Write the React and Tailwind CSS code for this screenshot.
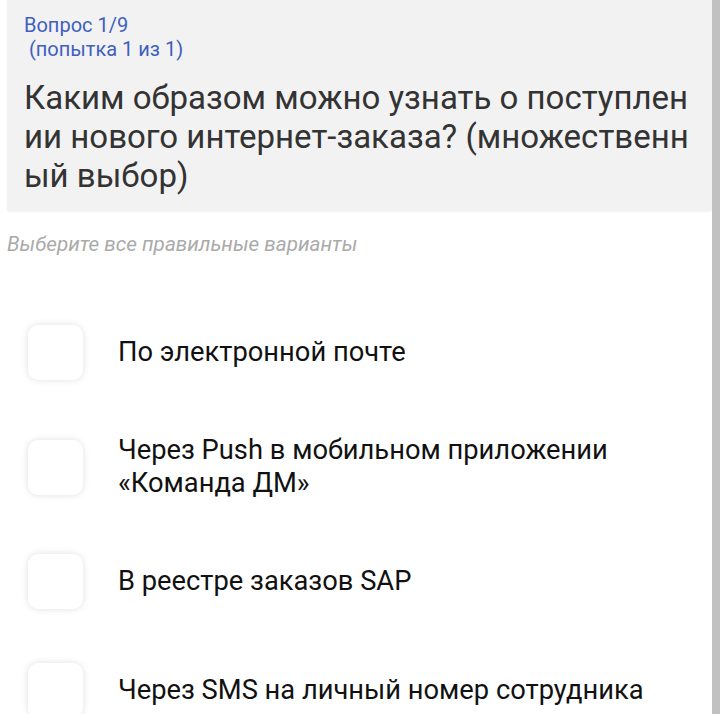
const options = [
  "По электронной почте",
  "Через Push в мобильном приложении «Команда ДМ»",
  "В реестре заказов SAP",
  "Через SMS на личный номер сотрудника",
];

export default function App() {
  return (
    <div className="flex h-[714px] w-[720px] overflow-hidden bg-white font-['Roboto',sans-serif]">
      <div className="flex-1 pl-[7px]">
        {/* question header */}
        <div className="h-[211px] rounded-b-[3px] bg-[#f2f2f2] pl-[17px] pr-[18px] pt-[13px] shadow-[0_1px_2px_rgba(0,0,0,0.05)]">
          <div className="text-[20px] leading-[24px] text-[#3f5fbf]">
            Вопрос 1/9
            <br />
            &nbsp;(попытка 1 из 1)
          </div>
          <div className="mt-[17px] break-all text-[33px] leading-[39px] text-[#333]">
            Каким образом можно узнать о поступлении нового интернет-заказа? (множественный выбор)
          </div>
        </div>

        <div className="mt-[20px] text-[20.7px] italic leading-[26px] text-[#aaa]">
          Выберите все правильные варианты
        </div>

        {/* answers */}
        <div className="mt-[68px] flex flex-col gap-[54px] pl-[21px] pr-[10px]">
          {options.map((o) => (
            <div key={o} className="flex items-center gap-[35px]">
              <div className="h-[55px] w-[55px] shrink-0 rounded-[10px] bg-white shadow-[0_0_7px_rgba(0,0,0,0.13)]" />
              <div className="flex-1 text-[27.3px] leading-[33px] text-[#111]">{o}</div>
            </div>
          ))}
        </div>
      </div>
      <div className="w-[8px] bg-[#c1c1c1]" />
    </div>
  );
}
